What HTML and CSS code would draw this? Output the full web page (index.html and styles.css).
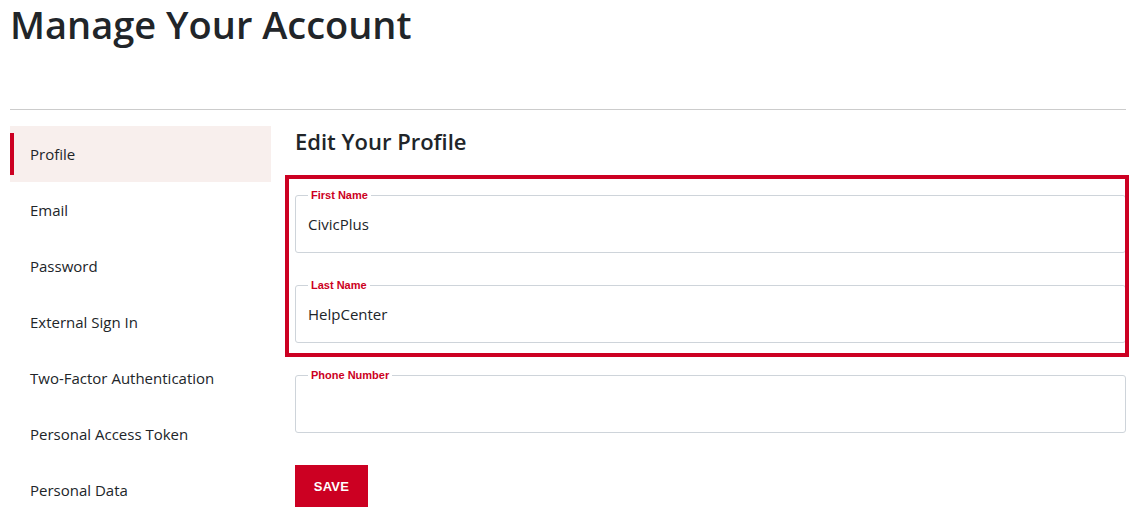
FILE: index.html
```html
<!DOCTYPE html>
<html lang="en">
<head>
<meta charset="utf-8">
<title>Manage Your Account</title>
<link rel="stylesheet" href="styles.css">
</head>
<body>
<div class="page">
  <h1 class="title">Manage Your Account</h1>
  <div class="rule"></div>
  <div class="layout">
    <nav class="sidebar">
      <a class="nav-item active" href="#">Profile</a>
      <a class="nav-item" href="#">Email</a>
      <a class="nav-item" href="#">Password</a>
      <a class="nav-item" href="#">External Sign In</a>
      <a class="nav-item" href="#">Two-Factor Authentication</a>
      <a class="nav-item" href="#">Personal Access Token</a>
      <a class="nav-item" href="#">Personal Data</a>
    </nav>
    <main class="main">
      <h2 class="heading">Edit Your Profile</h2>
      <div class="highlight">
        <fieldset class="field">
          <legend class="field-label">First Name</legend>
          <input class="field-input" type="text" value="CivicPlus">
        </fieldset>
        <fieldset class="field">
          <legend class="field-label">Last Name</legend>
          <input class="field-input" type="text" value="HelpCenter">
        </fieldset>
      </div>
      <fieldset class="field phone">
        <legend class="field-label">Phone Number</legend>
        <input class="field-input" type="text" value="">
      </fieldset>
      <button class="save" type="button">SAVE</button>
    </main>
  </div>
</div>
</body>
</html>
```
FILE: styles.css
```css
* { box-sizing: border-box; }
html, body { margin: 0; padding: 0; background: #fff; }
body {
  font-family: "Open Sans", "Noto Sans", sans-serif;
  color: #212529;
}
.page {
  padding: 0 5px 0 10px;
}
.title {
  margin: 0;
  padding-top: 1px;
  font-size: 38px;
  line-height: 47px;
  font-weight: 600;
  color: #212529;
}
.rule {
  margin-top: 61px;
  border-top: 1px solid #cccccc;
}
.layout {
  display: flex;
  gap: 24px;
  margin-top: 16px;
}
.sidebar {
  width: 261px;
  flex-shrink: 0;
  display: flex;
  flex-direction: column;
}
.nav-item {
  display: flex;
  align-items: center;
  height: 56px;
  font-size: 15px;
  color: #212529;
  text-decoration: none;
}
.nav-item::before {
  content: "";
  width: 4px;
  height: 42px;
  margin-right: 16px;
  background: transparent;
}
.nav-item.active {
  background: #f8efed;
}
.nav-item.active::before {
  background: #cc0022;
}
.main {
  flex: 1;
  display: flex;
  flex-direction: column;
  align-items: flex-start;
}
.heading {
  margin: 0;
  font-size: 22px;
  line-height: 30px;
  font-weight: 600;
  color: #212529;
}
.highlight {
  position: relative;
  align-self: stretch;
  display: flex;
  flex-direction: column;
  gap: 26px;
  margin-top: 33px;
}
.highlight::after {
  content: "";
  position: absolute;
  top: -14px;
  bottom: -14px;
  left: -10px;
  right: -3px;
  border: 4px solid #cc0022;
  pointer-events: none;
}
.field {
  margin: 0;
  min-width: 0;
  align-self: stretch;
  padding: 10px 12px 16px;
  border: 1px solid #ced4da;
  border-radius: 3px;
}
.field-label {
  padding: 0 3px;
  font-family: "Liberation Sans", Arial, sans-serif;
  font-size: 11px;
  line-height: 13px;
  font-weight: 700;
  color: #cc0022;
}
.field-input {
  display: block;
  width: 100%;
  height: 24px;
  padding: 0;
  border: none;
  outline: none;
  background: transparent;
  font-family: "Open Sans", "Noto Sans", sans-serif;
  font-size: 15px;
  color: #212529;
}
.phone {
  margin-top: 26px;
}
.save {
  margin-top: 32px;
  width: 73px;
  height: 42px;
  border: none;
  border-radius: 0;
  background: #cc0022;
  color: #fff;
  font-family: "Liberation Sans", Arial, sans-serif;
  font-size: 13px;
  font-weight: 700;
  letter-spacing: 0.3px;
  cursor: pointer;
}
```
